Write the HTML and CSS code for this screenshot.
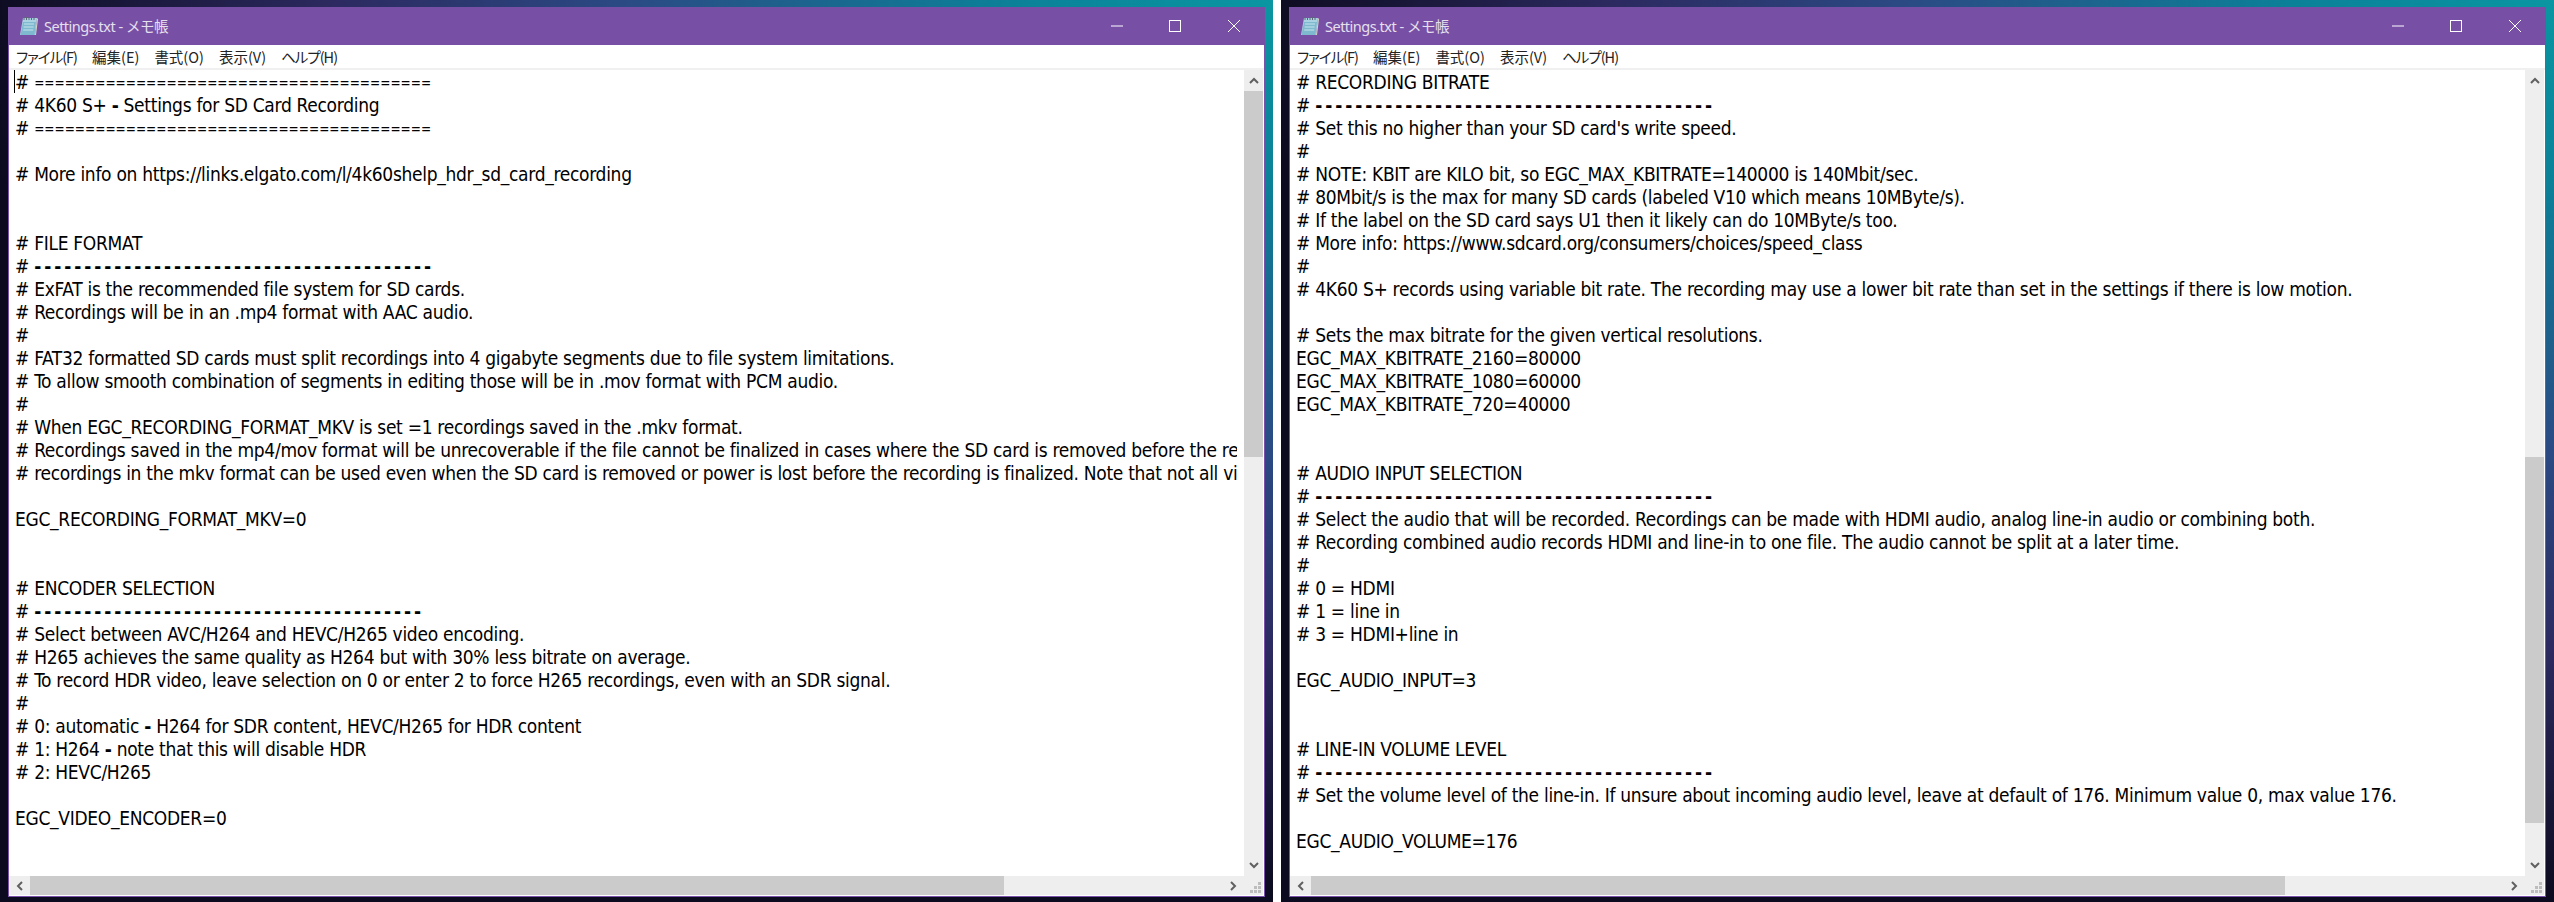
FILE: index.html
```html
<!DOCTYPE html>
<html lang="ja">
<head>
<meta charset="utf-8">
<title>Settings.txt - メモ帳</title>
<link rel="stylesheet" href="styles.css">
</head>
<body>
<div class="shots">
  <section class="shot">
    <div class="window">
      <header class="titlebar">
        <svg class="app-icon" viewBox="0 0 20 20"><path d="M4 2h14l-2 17H1z" fill="#a9d3e2"/><path d="M4 6h13l-1.500 13H1.500z" fill="#7fb9cf"/><path d="M5 8h10M4.600 11h10M4.200 14h10" stroke="#c7e4ee"/><path d="M5 1v3M7.500 1v3M10 1v3M12.500 1v3M15 1v3" stroke="#5a6a78"/><path d="M16 19l2-17 1 1-2 16z" fill="#d5d8c8"/></svg>
        <span class="title">Settings.txt - メモ帳</span>
        <div class="controls">
          <span class="ctl"><svg viewBox="0 0 12 12"><path d="M0 6h12" stroke="#fff"/></svg></span>
          <span class="ctl"><svg viewBox="0 0 12 12"><rect x=".5" y=".5" width="11" height="11" fill="none" stroke="#fff"/></svg></span>
          <span class="ctl"><svg viewBox="0 0 12 12"><path d="M0 0l12 12M12 0L0 12" stroke="#fff"/></svg></span>
        </div>
      </header>
      <nav class="menu"><span class="kana">ファイル(F)</span><span>編集(E)</span><span>書式(O)</span><span>表示(V)</span><span class="kana">ヘルプ(H)</span></nav>
      <div class="body">
        <div class="editor"><i class="caret"></i><pre class="text"># <b class="eqs">=======================================</b>
# 4K60 S+ <b class="dash1">-</b> Settings for SD Card Recording
# <b class="eqs">=======================================</b>

# More info on https://links.elgato.com/l/4k60shelp_hdr_sd_card_recording


# FILE FORMAT
# <b class="dashes">----------------------------------------</b>
# ExFAT is the recommended file system for SD cards.
# Recordings will be in an .mp4 format with AAC audio.
#
# FAT32 formatted SD cards must split recordings into 4 gigabyte segments due to file system limitations.
# To allow smooth combination of segments in editing those will be in .mov format with PCM audio.
#
# When EGC_RECORDING_FORMAT_MKV is set =1 recordings saved in the .mkv format.
# Recordings saved in the mp4/mov format will be unrecoverable if the file cannot be finalized in cases where the SD card is removed before the recording is finalized.
# recordings in the mkv format can be used even when the SD card is removed or power is lost before the recording is finalized. Note that not all video editors support this.

EGC_RECORDING_FORMAT_MKV=0


# ENCODER SELECTION
# <b class="dashes">---------------------------------------</b>
# Select between AVC/H264 and HEVC/H265 video encoding.
# H265 achieves the same quality as H264 but with 30% less bitrate on average.
# To record HDR video, leave selection on 0 or enter 2 to force H265 recordings, even with an SDR signal.
#
# 0: automatic <b class="dash1">-</b> H264 for SDR content, HEVC/H265 for HDR content
# 1: H264 <b class="dash1">-</b> note that this will disable HDR
# 2: HEVC/H265

EGC_VIDEO_ENCODER=0</pre></div>
        <aside class="vscroll">
          <span class="sbtn"><svg viewBox="0 0 10 7"><path d="M1 6l4-4 4 4" fill="none" stroke="#606060" stroke-width="2"/></svg></span>
          <div class="vtrack"><div class="vthumb"></div></div>
          <span class="sbtn"><svg viewBox="0 0 10 7"><path d="M1 1l4 4 4-4" fill="none" stroke="#606060" stroke-width="2"/></svg></span>
        </aside>
        <div class="hscroll">
          <span class="sbtn"><svg class="side" viewBox="0 0 7 10"><path d="M6 1L2 5l4 4" fill="none" stroke="#606060" stroke-width="2"/></svg></span>
          <div class="htrack"><div class="hthumb"></div></div>
          <span class="sbtn"><svg class="side" viewBox="0 0 7 10"><path d="M1 1l4 4-4 4" fill="none" stroke="#606060" stroke-width="2"/></svg></span>
        </div>
        <div class="grip"><svg viewBox="0 0 12 12"><path d="M8 0h3v3H8zM4 4h3v3H4zM8 4h3v3H8zM0 8h3v3H0zM4 8h3v3H4zM8 8h3v3H8z" fill="#bdbdbd"/></svg></div>
      </div>
    </div>
  </section>
  <section class="shot">
    <div class="window">
      <header class="titlebar">
        <svg class="app-icon" viewBox="0 0 20 20"><path d="M4 2h14l-2 17H1z" fill="#a9d3e2"/><path d="M4 6h13l-1.500 13H1.500z" fill="#7fb9cf"/><path d="M5 8h10M4.600 11h10M4.200 14h10" stroke="#c7e4ee"/><path d="M5 1v3M7.500 1v3M10 1v3M12.500 1v3M15 1v3" stroke="#5a6a78"/><path d="M16 19l2-17 1 1-2 16z" fill="#d5d8c8"/></svg>
        <span class="title">Settings.txt - メモ帳</span>
        <div class="controls">
          <span class="ctl"><svg viewBox="0 0 12 12"><path d="M0 6h12" stroke="#fff"/></svg></span>
          <span class="ctl"><svg viewBox="0 0 12 12"><rect x=".5" y=".5" width="11" height="11" fill="none" stroke="#fff"/></svg></span>
          <span class="ctl"><svg viewBox="0 0 12 12"><path d="M0 0l12 12M12 0L0 12" stroke="#fff"/></svg></span>
        </div>
      </header>
      <nav class="menu"><span class="kana">ファイル(F)</span><span>編集(E)</span><span>書式(O)</span><span>表示(V)</span><span class="kana">ヘルプ(H)</span></nav>
      <div class="body">
        <div class="editor"><pre class="text"># RECORDING BITRATE
# <b class="dashes">----------------------------------------</b>
# Set this no higher than your SD card's write speed.
#
# NOTE: KBIT are KILO bit, so EGC_MAX_KBITRATE=140000 is 140Mbit/sec.
# 80Mbit/s is the max for many SD cards (labeled V10 which means 10MByte/s).
# If the label on the SD card says U1 then it likely can do 10MByte/s too.
# More info: https://www.sdcard.org/consumers/choices/speed_class
#
# 4K60 S+ records using variable bit rate. The recording may use a lower bit rate than set in the settings if there is low motion.

# Sets the max bitrate for the given vertical resolutions.
EGC_MAX_KBITRATE_2160=80000
EGC_MAX_KBITRATE_1080=60000
EGC_MAX_KBITRATE_720=40000


# AUDIO INPUT SELECTION
# <b class="dashes">----------------------------------------</b>
# Select the audio that will be recorded. Recordings can be made with HDMI audio, analog line-in audio or combining both.
# Recording combined audio records HDMI and line-in to one file. The audio cannot be split at a later time.
#
# 0 = HDMI
# 1 = line in
# 3 = HDMI+line in

EGC_AUDIO_INPUT=3


# LINE-IN VOLUME LEVEL
# <b class="dashes">----------------------------------------</b>
# Set the volume level of the line-in. If unsure about incoming audio level, leave at default of 176. Minimum value 0, max value 176.

EGC_AUDIO_VOLUME=176</pre></div>
        <aside class="vscroll">
          <span class="sbtn"><svg viewBox="0 0 10 7"><path d="M1 6l4-4 4 4" fill="none" stroke="#606060" stroke-width="2"/></svg></span>
          <div class="vtrack"><div class="vthumb vthumb-low"></div></div>
          <span class="sbtn"><svg viewBox="0 0 10 7"><path d="M1 1l4 4 4-4" fill="none" stroke="#606060" stroke-width="2"/></svg></span>
        </aside>
        <div class="hscroll">
          <span class="sbtn"><svg class="side" viewBox="0 0 7 10"><path d="M6 1L2 5l4 4" fill="none" stroke="#606060" stroke-width="2"/></svg></span>
          <div class="htrack"><div class="hthumb"></div></div>
          <span class="sbtn"><svg class="side" viewBox="0 0 7 10"><path d="M1 1l4 4-4 4" fill="none" stroke="#606060" stroke-width="2"/></svg></span>
        </div>
        <div class="grip"><svg viewBox="0 0 12 12"><path d="M8 0h3v3H8zM4 4h3v3H4zM8 4h3v3H8zM0 8h3v3H0zM4 8h3v3H4zM8 8h3v3H8z" fill="#bdbdbd"/></svg></div>
      </div>
    </div>
  </section>
</div>
</body>
</html>
```
FILE: styles.css
```css
* { box-sizing: border-box; }
html, body { margin: 0; width: 2554px; height: 902px; overflow: hidden; background: #fff; }
.shots { display: flex; gap: 8px; height: 902px; }
.shot {
  width: 1273px; height: 902px; padding: 7px 8px 5px;
  background: radial-gradient(ellipse 1300px 900px at 100% 0, #0a96a2 0, #0b8198 20%, #2b4a84 50%, #2c2a60 72%, #0c0a1e 100%), #06060f;
}
.window { width: 1257px; height: 890px; border: 1px solid #7a52aa; border-top: 0; display: flex; flex-direction: column; background: #fff; }
.titlebar { height: 38px; background: #774fa5; margin: 0 -1px; display: flex; align-items: center; padding-left: 11px; flex: none; }
.app-icon { width: 20px; height: 20px; flex: none; }
.title { margin-left: 5px; color: #e6e0ee; font: 14.5px/38px "Noto Sans", "Noto Sans CJK JP", sans-serif; letter-spacing: -0.5px; }
.controls { margin-left: auto; margin-right: 2px; display: flex; }
.ctl { width: 58.5px; height: 38px; display: flex; align-items: center; justify-content: center; }
.ctl svg { width: 12px; height: 12px; }
.menu { height: 23px; flex: none; display: flex; gap: 15px; padding-left: 7px; align-items: center; font: 14.5px/23px "Noto Sans CJK JP", "Noto Sans", sans-serif; font-feature-settings: "palt"; color: #222; }
.kana { letter-spacing: -1px; }
.body { flex: 1; min-height: 0; border-top: 2px solid #f0f0f0; display: grid; grid-template-columns: 1235px 19px; grid-template-rows: 806px 19px; padding-right: 1px; }
.editor { position: relative; padding: 1px 7px 0 6px; overflow: hidden; min-width: 0; }
.text { margin: 0; overflow: hidden; height: 100%; font-family: "DejaVu Sans", sans-serif; font-stretch: condensed; font-size: 19px; letter-spacing: -0.3px; line-height: 23px; color: #000; white-space: pre; }
.dashes { font-weight: 700; letter-spacing: 2.9px; }
.dash1 { font-weight: 700; }
.eqs { font-weight: 400; font-size: 13.5px; letter-spacing: 0; line-height: 0; vertical-align: 1px; }
.caret { position: absolute; left: 5px; top: 0; width: 1px; height: 23px; background: #000; }
.vscroll { background: #eee; display: flex; flex-direction: column; }
.sbtn { flex: none; width: 21px; height: 21px; display: flex; align-items: center; justify-content: center; }
.vscroll .sbtn { width: 19px; }
.sbtn svg { width: 10px; height: 7px; }
.sbtn svg.side { width: 7px; height: 10px; }
.vtrack { flex: 1; }
.vthumb { height: 366px; background: #cbcbcb; }
.vthumb-low { margin-top: 366px; }
.hscroll { background: #eee; display: flex; height: 19px; }
.hscroll .sbtn { height: 19px; }
.htrack { flex: 1; }
.hthumb { width: 974px; height: 19px; background: #cbcbcb; }
.grip { background: #eee; display: flex; align-items: flex-end; justify-content: flex-end; padding: 0 1px 1px 0; }
.grip svg { width: 12px; height: 12px; }
```
